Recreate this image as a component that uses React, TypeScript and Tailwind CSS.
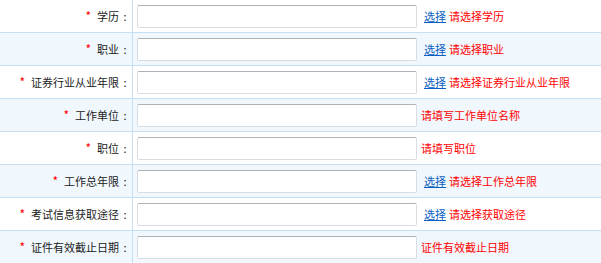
type Row = {
    label: string;
    pick?: boolean;
    hint: string;
};

const rows: Row[] = [
    { label: "学历", pick: true, hint: "请选择学历" },
    { label: "职业", pick: true, hint: "请选择职业" },
    { label: "证券行业从业年限", pick: true, hint: "请选择证券行业从业年限" },
    { label: "工作单位", hint: "请填写工作单位名称" },
    { label: "职位", hint: "请填写职位" },
    { label: "工作总年限", pick: true, hint: "请选择工作总年限" },
    { label: "考试信息获取途径", pick: true, hint: "请选择获取途径" },
    { label: "证件有效截止日期", hint: "证件有效截止日期" },
];

export default function App() {
    return (
        <div
            className="w-[601px] h-[263px] overflow-hidden bg-white text-[11px] leading-none text-[#222]"
            style={{ fontFamily: '"Noto Sans CJK SC", "Noto Sans", sans-serif' }}
        >
            {rows.map((row, i) => (
                <div
                    key={row.label}
                    className={`flex h-[33px] border-b border-[#c6def2] ${
                        i % 2 === 1 ? "bg-[#f0f7fd]" : "bg-white"
                    }`}
                >
                    <div className="w-[133px] shrink-0 border-r border-[#c6def2] flex items-center justify-end pr-[2px]">
                        <span className="text-[#f00] mr-[6px] text-[12px]">*</span>
                        <span>{row.label}</span>
                        <span className="inline-block w-[10px] ml-[1px] text-center">:</span>
                    </div>
                    <div className="flex items-center pl-[4px]">
                        <input
                            type="text"
                            className="w-[280px] h-[23px] rounded-[2px] border border-[#d9dde3] border-t-[#aeb1b6] bg-white outline-none"
                        />
                        {row.pick ? (
                            <span className="ml-[7px] flex items-center">
                                <a href="#" className="text-[#0a5fc2] underline">
                                    选择
                                </a>
                                <span className="ml-[3px] text-[#f00]">{row.hint}</span>
                            </span>
                        ) : (
                            <span className="ml-[4px] text-[#f00]">{row.hint}</span>
                        )}
                    </div>
                </div>
            ))}
        </div>
    );
}
